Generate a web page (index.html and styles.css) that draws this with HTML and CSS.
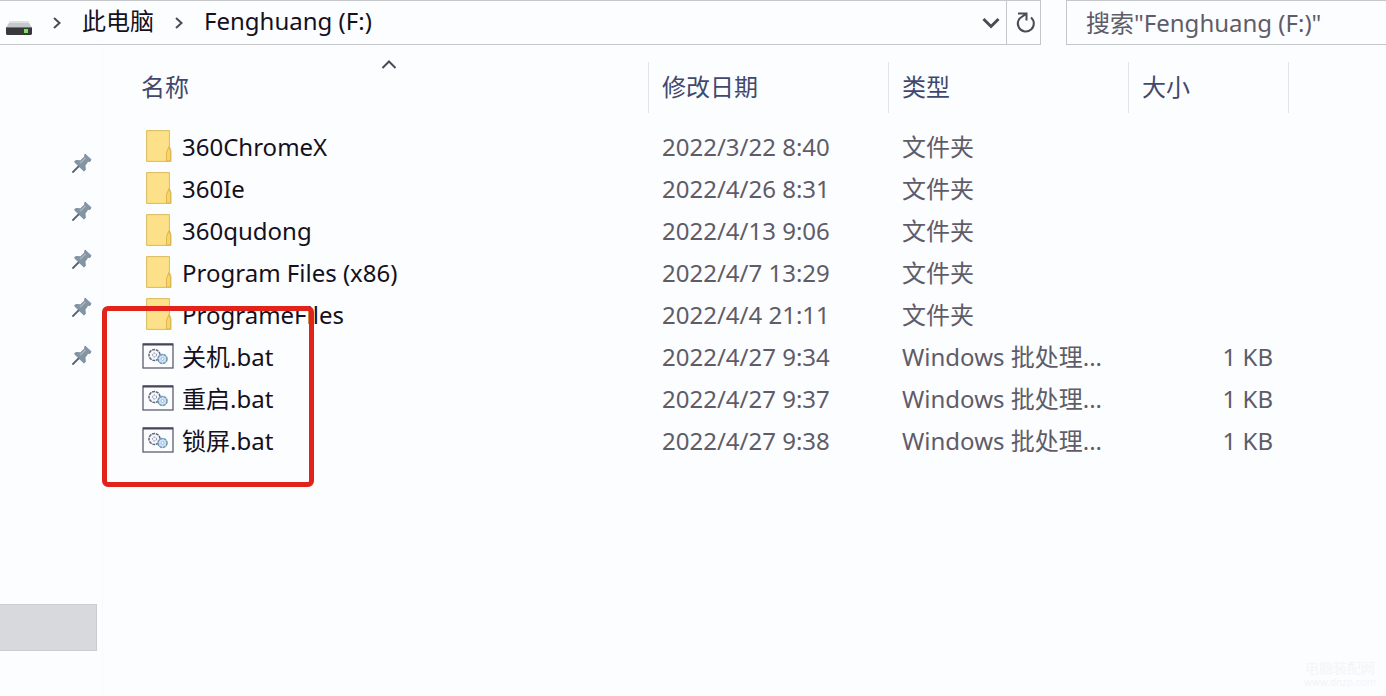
FILE: index.html
```html
<!DOCTYPE html>
<html lang="zh-CN">
<head>
    <meta charset="UTF-8">
    <meta name="viewport" content="width=device-width, initial-scale=1.0">
    <title>Fenghuang (F:)</title>
    <link rel="stylesheet" href="styles.css">
</head>
<body>
    <svg class="symbols" width="0" height="0" aria-hidden="true">
        <symbol id="folder" viewBox="0 0 26 34">
            <path d="M1.500 1.500h23v16l1.500 4v11H1.500z" fill="#fbdd78" stroke="#dfc06a"/>
            <path d="M3 3h20.500v14L21 23v8H3z" fill="#fde08a"/>
            <path d="M24 17.500l-2.500 6v8.500h4v-9.500z" fill="#f9d468" stroke="#dcb650"/>
        </symbol>
        <symbol id="bat" viewBox="0 0 32 26">
            <rect x="1" y="1" width="30" height="24" fill="#fbfdff" stroke="#5d5c70" stroke-width="1.300"/>
            <path d="M1 1.500h30" stroke="#45445a" stroke-width="2"/>
            <circle cx="12.500" cy="12" r="5.500" fill="#f4f6fa" stroke="#62677a" stroke-width="1.500" stroke-dasharray="3 .8"/>
            <circle cx="12.500" cy="12" r="2" fill="none" stroke="#7b8397" stroke-dasharray="1.500 1"/>
            <circle cx="20.500" cy="16" r="4.500" fill="#cfe3f4" stroke="#6d93b8" stroke-width="1.500" stroke-dasharray="3 .6"/>
            <circle cx="20.500" cy="16" r="1.500" fill="#f4faff" stroke="#8db4d6" stroke-width=".8"/>
        </symbol>
        <symbol id="pin" viewBox="0 0 20 20">
            <path d="M7.500 12.500L1 19" stroke="#59636d" stroke-width="1.800" stroke-linecap="round"/>
            <path d="M13 1l6 5.500-1 2-2-.3-3 4.300 .3 4.500-1.500 1L2.500 9l1.200-1.500 4.600.3L12.500 4z" fill="#8495a5" stroke="#718293" stroke-width=".8"/>
            <path d="M8 10l5.500-5" stroke="#a6b5c2" stroke-width="1.500"/>
        </symbol>
    </svg>

    <header class="toolbar">
        <nav class="address">
            <svg class="drive" viewBox="0 0 26 16" aria-hidden="true">
                <path d="M4 1h18l4 7H0z" fill="#c3c9cb"/>
                <path d="M4 1h18l1 2H3z" fill="#dde1e2"/>
                <path d="M0 7h26v7l-1 1H1l-1-1z" fill="#38393b"/>
                <path d="M0 7.500h26" stroke="#707577"/>
                <rect x="18" y="9" width="4" height="4" fill="#7fe35a"/>
            </svg>
            <svg class="crumb-arrow" viewBox="0 0 10 12"><path d="M2 1l5.500 5L2 11"/></svg>
            <a href="#" class="crumb">此电脑</a>
            <svg class="crumb-arrow" viewBox="0 0 10 12"><path d="M2 1l5.500 5L2 11"/></svg>
            <a href="#" class="crumb">Fenghuang (F:)</a>
            <button type="button" class="history" aria-label="历史记录">
                <svg width="18" height="12" viewBox="0 0 18 12"><path d="M1.500 2L9 9.500 16.500 2"/></svg>
            </button>
            <button type="button" class="refresh" aria-label="刷新">
                <svg width="20" height="22" viewBox="0 0 20 22"><path d="M15 5.500a8 8 0 1 1-8.500-1.200L10 2M2 1.500h8.500v7"/></svg>
            </button>
        </nav>
        <input class="search" type="text" aria-label="搜索" placeholder='搜索"Fenghuang (F:)"'>
    </header>

    <div class="explorer">
        <aside class="sidebar">
            <ul class="pins">
                <li><svg><use href="#pin"/></svg></li>
                <li><svg><use href="#pin"/></svg></li>
                <li><svg><use href="#pin"/></svg></li>
                <li><svg><use href="#pin"/></svg></li>
                <li><svg><use href="#pin"/></svg></li>
            </ul>
            <div class="selected"></div>
        </aside>

        <main class="content">
            <table class="files">
                <thead>
                    <tr>
                        <th class="name">名称
                            <svg class="sort" viewBox="0 0 16 9"><path d="M1.500 8L8 1.500 14.500 8"/></svg>
                        </th>
                        <th class="date">修改日期</th>
                        <th class="type">类型</th>
                        <th class="size">大小</th>
                    </tr>
                </thead>
                <tbody>
                    <tr>
                        <td class="name"><svg><use href="#folder"/></svg>360ChromeX</td>
                        <td>2022/3/22 8:40</td>
                        <td>文件夹</td>
                        <td></td>
                    </tr>
                    <tr>
                        <td class="name"><svg><use href="#folder"/></svg>360Ie</td>
                        <td>2022/4/26 8:31</td>
                        <td>文件夹</td>
                        <td></td>
                    </tr>
                    <tr>
                        <td class="name"><svg><use href="#folder"/></svg>360qudong</td>
                        <td>2022/4/13 9:06</td>
                        <td>文件夹</td>
                        <td></td>
                    </tr>
                    <tr>
                        <td class="name"><svg><use href="#folder"/></svg>Program Files (x86)</td>
                        <td>2022/4/7 13:29</td>
                        <td>文件夹</td>
                        <td></td>
                    </tr>
                    <tr>
                        <td class="name"><svg><use href="#folder"/></svg>ProgrameFiles</td>
                        <td>2022/4/4 21:11</td>
                        <td>文件夹</td>
                        <td></td>
                    </tr>
                    <tr>
                        <td class="name"><svg><use href="#bat"/></svg>关机.bat</td>
                        <td>2022/4/27 9:34</td>
                        <td>Windows 批处理...</td>
                        <td class="kb">1 KB</td>
                    </tr>
                    <tr>
                        <td class="name"><svg><use href="#bat"/></svg>重启.bat</td>
                        <td>2022/4/27 9:37</td>
                        <td>Windows 批处理...</td>
                        <td class="kb">1 KB</td>
                    </tr>
                    <tr>
                        <td class="name"><svg><use href="#bat"/></svg>锁屏.bat</td>
                        <td>2022/4/27 9:38</td>
                        <td>Windows 批处理...</td>
                        <td class="kb">1 KB</td>
                    </tr>
                </tbody>
            </table>
            <div class="highlight"></div>
        </main>
    </div>

    <div class="watermark">电脑装配网<span>www.dnzp.com</span></div>
</body>
</html>
```
FILE: styles.css
```css
* {
    box-sizing: border-box;
    margin: 0;
    padding: 0;
}

body {
    display: flex;
    flex-direction: column;
    min-height: 100vh;
    position: relative;
    background: #fcfdff;
    color: #14101c;
    font-family: "Noto Sans", "Noto Sans CJK SC", sans-serif;
    font-size: 24px;
    line-height: 32px;
}

svg {
    flex: none;
}

.symbols {
    position: absolute;
}

/* 地址栏和搜索框 */
.toolbar {
    display: flex;
    gap: 25px;
    height: 45px;
}

.address {
    flex: 1;
    display: flex;
    align-items: center;
    border: 1px solid #c6c7cb;
    border-left: none;
    padding-left: 6px;
}

.drive {
    width: 26px;
    height: 16px;
    margin-top: 10px;
}

.crumb-arrow {
    width: 10px;
    height: 12px;
    margin: 0 20px;
}

.crumb-arrow path,
.address button path,
.sort path {
    fill: none;
    stroke: #4c4b55;
    stroke-width: 2;
}

.address .history path {
    stroke-width: 3;
}

.crumb {
    padding-bottom: 3px;
    color: inherit;
    text-decoration: none;
}

.address button {
    display: flex;
    align-items: center;
    justify-content: center;
    width: 34px;
    height: 100%;
    padding-left: 4px;
    border: none;
    background: none;
}

.address .history {
    margin-left: auto;
}

.address .refresh {
    border-left: 1px solid #c6c7cb;
}

.search {
    width: 320px;
    border: 1px solid #c6c7cb;
    border-right: none;
    padding-left: 19px;
    background: transparent;
    font: inherit;
}

.search::placeholder {
    color: #5f5c68;
    opacity: 1;
}

.explorer {
    flex: 1;
    display: flex;
}

/* 侧边栏 */
.sidebar {
    width: 103px;
    padding-top: 94px;
    border-right: 1px solid #f7f9fb;
}

.pins {
    list-style: none;
}

.pins li {
    display: flex;
    align-items: center;
    justify-content: flex-end;
    height: 48px;
    padding-right: 10px;
}

.pins svg {
    width: 20px;
    height: 20px;
}

.selected {
    width: 97px;
    height: 47px;
    margin-top: 225px;
    background: #d8d9dc;
    border: 1px solid #cbccd0;
    border-left: none;
}

/* 文件列表 */
.content {
    flex: 1;
    position: relative;
    padding: 17px 97px 0 0;
}

.files {
    width: 100%;
    table-layout: fixed;
    border-spacing: 0;
}

.files th {
    height: 51px;
    padding: 0 0 2px 13px;
    border-right: 1px solid #e2e4ea;
    color: #42486c;
    font-weight: 400;
    text-align: left;
}

.files th.name {
    position: relative;
    padding-left: 38px;
}

.date,
.type {
    width: 240px;
}

.size {
    width: 160px;
}

.sort {
    position: absolute;
    top: -2px;
    left: 50%;
    width: 16px;
    height: 9px;
    margin-left: 5px;
}

.files tbody::before {
    content: "";
    display: block;
    height: 13px;
}

.files td {
    height: 42px;
    padding-left: 13px;
    color: #5f5c68;
    white-space: nowrap;
}

.files td.name {
    display: flex;
    align-items: center;
    gap: 8px;
    padding-left: 39px;
    color: #14101c;
}

.files td svg {
    width: 32px;
    height: 34px;
    margin-bottom: 3px;
}

.files td.kb {
    padding-right: 16px;
    text-align: right;
}

/* bat 文件外的红框 */
.highlight {
    position: absolute;
    top: 261px;
    left: -1px;
    width: 212px;
    height: 181px;
    border: 5px solid #e2231a;
    border-radius: 6px;
}

.watermark {
    position: absolute;
    right: 10px;
    bottom: 8px;
    color: #f3f5f7;
    font-size: 14px;
    line-height: 16px;
    text-align: center;
}

.watermark span {
    display: block;
    font-size: 10px;
    line-height: 12px;
}
```
